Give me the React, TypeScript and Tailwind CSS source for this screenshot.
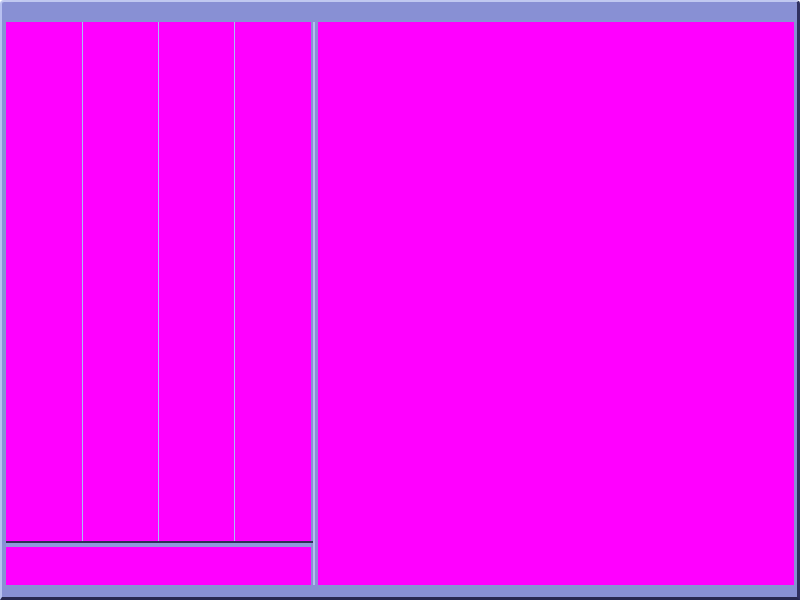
export default function App() {
  return (
    <div className="w-[800px] h-[600px] overflow-hidden rounded-t-[4px] border-t-2 border-l-2 border-r-[3px] border-b-[3px] border-t-[#c0c8f0] border-l-[#b8c0f0] border-r-[#303060] border-b-[#282850] bg-[#8890d4] pl-1 pr-[3px] pt-5 pb-3 flex">
      {/* left pane: four columns + footer strip; the separator runs into the splitter */}
      <div className="w-[307px] flex flex-col">
        <div className="h-[519px] flex">
          <div className="w-[305px] flex bg-[#ff00ff]">
            <div className="w-[76px]" />
            <div className="w-px bg-[#a8bcf4]" />
            <div className="w-[75px]" />
            <div className="w-px bg-[#a8bcf4]" />
            <div className="w-[75px]" />
            <div className="w-px bg-[#a8bcf4]" />
            <div className="flex-1" />
          </div>
        </div>
        <div className="h-[2px] bg-[#303058]" />
        <div className="h-[4px] w-[305px] bg-[#9098dc]" />
        <div className="flex-1 w-[305px] bg-[#ff00ff]" />
      </div>
      {/* splitter */}
      <div className="w-[5px] flex">
        <div className="w-[2px] bg-[#b4bcf0]" />
      </div>
      {/* right pane */}
      <div className="flex-1 bg-[#ff00ff]" />
    </div>
  );
}
